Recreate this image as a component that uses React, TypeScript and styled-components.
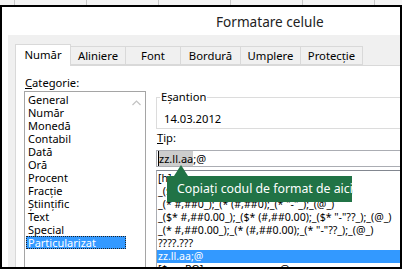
import React from 'react';
import styled, { createGlobalStyle } from 'styled-components';

const GlobalStyle = createGlobalStyle`
  html, body {
    margin: 0;
    padding: 0;
    background: #fff;
  }
  body {
    font-family: 'Noto Sans', 'Liberation Sans', sans-serif;
    color: #000;
  }
`;

const headerCells = [15, 72, 72, 72, 72, 72, 72];
const tabs = [
  { label: 'Număr', width: 56 },
  { label: 'Aliniere', width: 56 },
  { label: 'Font', width: 56 },
  { label: 'Bordură', width: 61 },
  { label: 'Umplere', width: 61 },
  { label: 'Protecție', width: 63 },
];
const categories = [
  'General',
  'Număr',
  'Monedă',
  'Contabil',
  'Dată',
  'Oră',
  'Procent',
  'Fracție',
  'Științific',
  'Text',
  'Special',
  'Particularizat',
];
const formats = [
  '[h]:mm:ss',
  '_($* #,##0_);_($* (#,##0);_($* "-"_);_(@_)',
  '_(* #,##0_);_(* (#,##0);_(* "-"_);_(@_)',
  '_($* #,##0.00_);_($* (#,##0.00);_($* "-"??_);_(@_)',
  '_(* #,##0.00_);_(* (#,##0.00);_(* "-"??_);_(@_)',
  '????.???',
  'zz.ll.aa;@',
  '[$-ro-RO]z mmmm aaaa;@',
];

const App = () => {
  return (
    <Screen>
      <GlobalStyle />
      <SheetHeader>
        {headerCells.map((w, i) => (
          <HeaderCell key={`col-${i}`} $w={w} />
        ))}
      </SheetHeader>
      <Frame>
        <TitleBar>Formatare celule</TitleBar>
        <DialogBody>
          <TabRow>
            {tabs.map((t, i) => (
              <Tab key={t.label} $w={t.width} $active={i === 0}>
                {t.label}
              </Tab>
            ))}
          </TabRow>
          <Panel>
            <LeftColumn>
              <Label>
                <u>C</u>ategorie:
              </Label>
              <CategoryBox>
                <CategoryItems>
                  {categories.map((c) => (
                    <CategoryItem key={c} $selected={c === 'Particularizat'}>
                      {c}
                    </CategoryItem>
                  ))}
                </CategoryItems>
                <ScrollTrack>
                  <svg width="9" height="6" viewBox="0 0 9 6">
                    <path d="M0.5 5 L4.5 1 L8.5 5" fill="none" stroke="#c2c2c2" strokeWidth="1.2" />
                  </svg>
                </ScrollTrack>
              </CategoryBox>
            </LeftColumn>
            <RightColumn>
              <SampleGroup>
                <SampleLegend>Eșantion</SampleLegend>
                <SampleValue>14.03.2012</SampleValue>
              </SampleGroup>
              <TypeLabel>
                <u>T</u>ip:
              </TypeLabel>
              <TypeInput>
                <Selection>zz.ll.aa</Selection>;@
              </TypeInput>
              <FormatList>
                {formats.map((f) => (
                  <FormatRow key={f} $selected={f === 'zz.ll.aa;@'}>
                    {f}
                  </FormatRow>
                ))}
              </FormatList>
              <Tooltip>Copiați codul de format de aici</Tooltip>
            </RightColumn>
          </Panel>
        </DialogBody>
      </Frame>
    </Screen>
  );
};

const Screen = styled.div`
  width: 402px;
  height: 269px;
  overflow: hidden;
  display: flex;
  flex-direction: column;
  background: #fff;
`;

const SheetHeader = styled.div`
  height: 5px;
  flex-shrink: 0;
  display: flex;
  background: #f4f4f4;
`;

const HeaderCell = styled.div<{ $w: number }>`
  width: ${({ $w }) => $w}px;
  flex-shrink: 0;
  box-sizing: border-box;
  border-right: 1px solid #c8c8c8;
`;

const Frame = styled.div`
  flex: 1;
  min-height: 0;
  display: flex;
  flex-direction: column;
  border: 2px solid #000;
  overflow: hidden;
`;

const TitleBar = styled.div`
  height: 28px;
  flex-shrink: 0;
  box-sizing: border-box;
  padding: 1px 0 0 214px;
  line-height: 28px;
  font-size: 13.6px;
  color: #222;
  background: #fff;
`;

const DialogBody = styled.div`
  flex: 1;
  min-height: 0;
  margin-left: 6px;
  padding: 9px 0 0 7px;
  background: #f0f0f0;
  display: flex;
  flex-direction: column;
`;

const TabRow = styled.div`
  display: flex;
  align-items: flex-end;
  height: 21px;
  flex-shrink: 0;
`;

const Tab = styled.div<{ $w: number; $active: boolean }>`
  position: relative;
  z-index: ${({ $active }) => ($active ? 1 : 0)};
  box-sizing: border-box;
  width: ${({ $w }) => $w}px;
  height: ${({ $active }) => ($active ? 22 : 19)}px;
  margin-right: -1px;
  margin-bottom: ${({ $active }) => ($active ? -1 : 0)}px;
  padding-top: ${({ $active }) => ($active ? 2 : 1)}px;
  border: 1px solid #d9d9d9;
  border-bottom: ${({ $active }) => ($active ? 'none' : '1px solid #d9d9d9')};
  background: ${({ $active }) => ($active ? '#fff' : '#f0f0f0')};
  text-align: center;
  font-size: 11.3px;
  line-height: 15px;
`;

const Panel = styled.div`
  flex: 1;
  min-height: 0;
  display: flex;
  gap: 10px;
  padding: 9px 0 0 8px;
  background: #fff;
  border-top: 1px solid #d9d9d9;
  border-left: 1px solid #d9d9d9;
  overflow: hidden;
`;

const LeftColumn = styled.div`
  width: 122px;
  flex-shrink: 0;
  display: flex;
  flex-direction: column;
`;

const Label = styled.div`
  height: 16px;
  line-height: 16px;
  font-size: 11.2px;
  padding-left: 1px;
`;

const CategoryBox = styled.div`
  height: 190px;
  flex-shrink: 0;
  display: flex;
  border: 1px solid #a5a5a5;
  background: #fff;
`;

const CategoryItems = styled.div`
  flex: 1;
  padding: 1px;
`;

const CategoryItem = styled.div<{ $selected: boolean }>`
  height: 13px;
  line-height: 13px;
  padding-left: 2px;
  font-size: 11px;
  white-space: nowrap;
  background: ${({ $selected }) => ($selected ? '#3399ff' : 'transparent')};
  color: ${({ $selected }) => ($selected ? '#fff' : '#000')};
  outline: ${({ $selected }) => ($selected ? '1px dotted #222' : 'none')};
  outline-offset: -1px;
`;

const ScrollTrack = styled.div`
  width: 18px;
  display: flex;
  justify-content: center;
  padding-top: 8px;
  align-items: flex-start;
`;

const RightColumn = styled.div`
  position: relative;
  flex: 1;
  min-width: 0;
  padding-top: 14px;
  display: flex;
  flex-direction: column;
`;

const SampleGroup = styled.fieldset`
  margin: 0;
  padding: 0 0 1px 0;
  min-width: 0;
  border: 1px solid #dcdcdc;
  border-right: none;
`;

const SampleLegend = styled.legend`
  margin-left: 3px;
  padding: 0 1px;
  height: 16px;
  line-height: 16px;
  font-size: 11.2px;
`;

const SampleValue = styled.div`
  margin-top: 6px;
  padding-left: 7px;
  line-height: 16px;
  font-size: 11.2px;
`;

const TypeLabel = styled.div`
  margin-top: 1px;
  height: 16px;
  line-height: 16px;
  font-size: 11.2px;
  padding-left: 1px;
`;

const TypeInput = styled.div`
  margin-top: 4px;
  height: 17px;
  box-sizing: border-box;
  border: 1px solid #abadb3;
  border-right: none;
  padding-left: 1px;
  line-height: 15px;
  font-size: 11px;
  white-space: nowrap;
`;

const Selection = styled.span`
  background: #cdcdcd;
  border-left: 1px solid #000;
`;

const FormatList = styled.div`
  margin-top: 3px;
  padding-top: 1px;
  border-top: 1px solid #828790;
  border-left: 1px solid #abadb3;
`;

const FormatRow = styled.div<{ $selected: boolean }>`
  height: 13px;
  line-height: 13px;
  padding-left: 1px;
  font-size: 10.6px;
  white-space: nowrap;
  overflow: hidden;
  background: ${({ $selected }) => ($selected ? '#3399ff' : 'transparent')};
  color: ${({ $selected }) => ($selected ? '#fff' : '#000')};
`;

const Tooltip = styled.div`
  position: absolute;
  left: 11px;
  top: 101px;
  width: 185px;
  height: 26px;
  box-sizing: border-box;
  padding-left: 10px;
  background: #217346;
  color: #fff;
  font-size: 12.3px;
  line-height: 26px;
  white-space: nowrap;

  &::before {
    content: '';
    position: absolute;
    left: 7px;
    top: -11px;
    border-left: 7px solid transparent;
    border-right: 7px solid transparent;
    border-bottom: 11px solid #217346;
  }
`;

export default App;
